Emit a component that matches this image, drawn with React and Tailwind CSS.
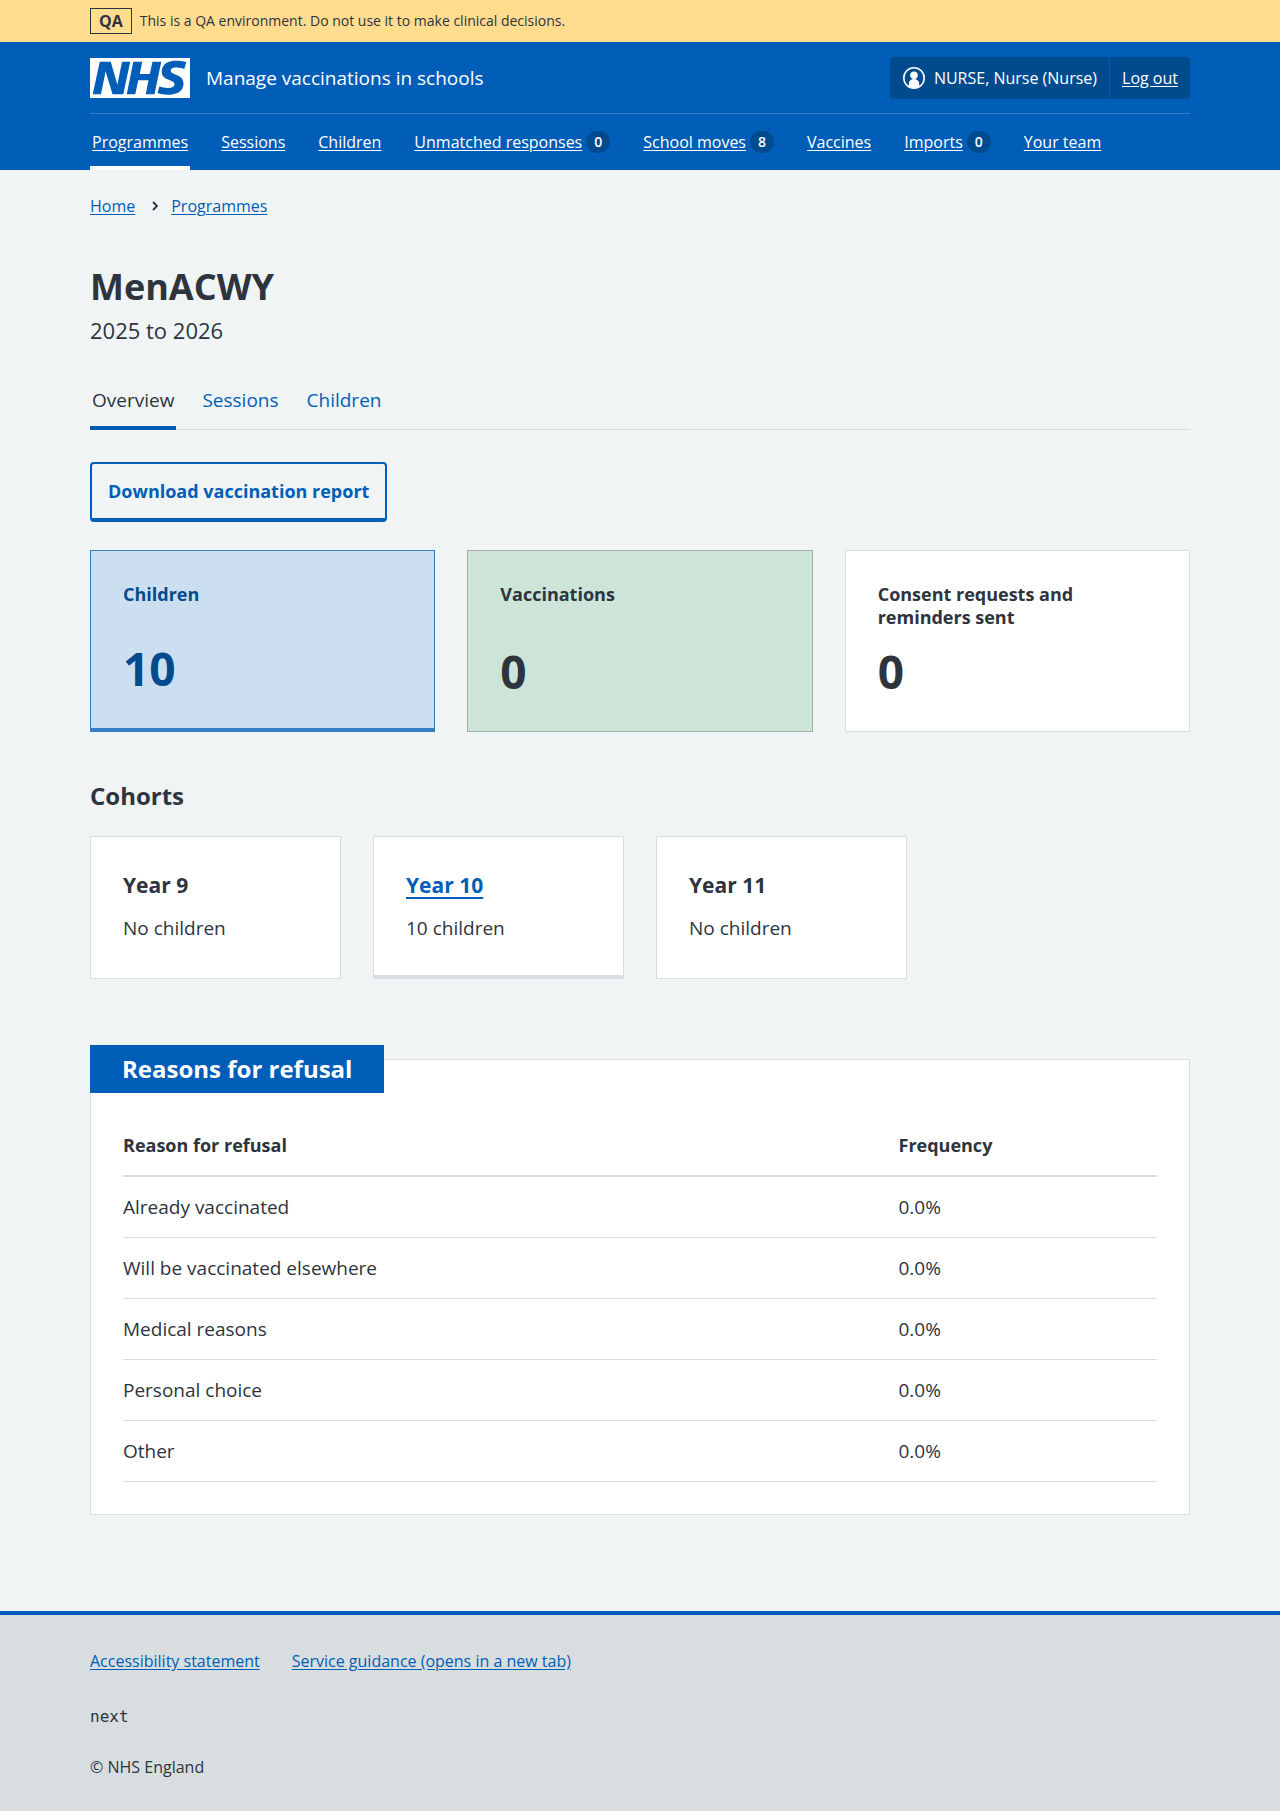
const navItems = [
  { label: "Programmes", current: true },
  { label: "Sessions" },
  { label: "Children" },
  { label: "Unmatched responses", count: 0 },
  { label: "School moves", count: 8 },
  { label: "Vaccines" },
  { label: "Imports", count: 0 },
  { label: "Your team" },
];

const reasons = [
  "Already vaccinated",
  "Will be vaccinated elsewhere",
  "Medical reasons",
  "Personal choice",
  "Other",
];

function Container({ className = "", children }) {
  return <div className={`mx-auto w-full max-w-[1164px] px-8 ${className}`}>{children}</div>;
}

function EnvironmentBanner() {
  return (
    <div className="bg-[#ffdc8e]">
      <Container className="flex h-[42px] items-center gap-2">
        <strong className="border border-[#2d343d] px-2 text-base leading-6 font-bold">QA</strong>
        <span className="text-sm">This is a QA environment. Do not use it to make clinical decisions.</span>
      </Container>
    </div>
  );
}

function Logo() {
  return (
    <svg className="h-10 w-[100px]" viewBox="0 0 40 16" role="img" aria-label="NHS">
      <path fill="#fff" d="M0 0h40v16H0z" />
      <path
        fill="#005eb8"
        d="M3.9 1.5h4.4l2.6 9h.1l1.8-9h3.3l-2.8 13H9l-2.7-9h-.1l-1.8 9H1.1M17.3 1.5h3.6l-1 4.9h4L25 1.5h3.5l-2.7 13h-3.5l1.1-5.6h-4.1l-1.2 5.6h-3.4M37.7 4.4c-.7-.3-1.6-.6-2.9-.6-1.4 0-2.5.2-2.5 1.3 0 1.8 5.1 1.2 5.1 5.1 0 3.6-3.3 4.5-6.4 4.5-1.3 0-2.9-.3-4-.7l.8-2.7c.7.4 2.1.7 3.2.7s2.8-.2 2.8-1.5c0-2.1-5.1-1.3-5.1-5 0-3.4 2.9-4.4 5.8-4.4 1.6 0 3.1.2 4 .6"
      />
    </svg>
  );
}

function UserIcon() {
  return (
    <svg className="h-6 w-6" viewBox="0 0 24 24" aria-hidden="true">
      <circle cx="12" cy="12" r="10.2" fill="none" stroke="#fff" strokeWidth="1.6" />
      <circle cx="12" cy="9.2" r="3.8" fill="#fff" />
      <path fill="#fff" d="M6.8 21v-3.5a5.2 4.5 0 0 1 10.4 0V21a10.500 10.500 0 0 1-10.400 0z" />
    </svg>
  );
}

function Header() {
  return (
    <header className="bg-[#005eb8] text-white">
      <Container>
        <div className="flex h-[71px] items-center justify-between">
          <a href="#" className="flex items-center gap-4">
            <Logo />
            <span className="text-[19px] leading-7">Manage vaccinations in schools</span>
          </a>
          <div className="flex h-[42px] items-stretch rounded bg-[#004b8d] text-base">
            <span className="flex items-center gap-2 px-3">
              <UserIcon />
              NURSE, Nurse (Nurse)
            </span>
            <a href="#" className="flex items-center border-l border-[#005eb8] px-3 underline underline-offset-2">
              Log out
            </a>
          </div>
        </div>
        <nav aria-label="Main" className="flex gap-[29px] border-t border-[#337ec6]">
          {navItems.map((item) => (
            <a
              key={item.label}
              href="#"
              className={`flex h-14 items-center gap-1 border-b-4 px-0.5 pt-1 text-base ${item.current ? "border-white" : "border-transparent"}`}
            >
              <span className="underline underline-offset-2">{item.label}</span>
              {item.count !== undefined && (
                <span className="flex h-[22px] min-w-6 items-center justify-center rounded-full bg-[#004b8d] text-sm font-semibold">
                  {item.count}
                </span>
              )}
            </a>
          ))}
        </nav>
      </Container>
    </header>
  );
}

function StatCard({ title, value, className, href }) {
  const linked = Boolean(href);
  return (
    <div className={`flex min-h-[182px] flex-col justify-between px-8 pt-8 pb-7 ${className}`}>
      <h2 className="text-lg leading-[23px] font-bold">
        {linked ? <a href={href}>{title}</a> : title}
      </h2>
      <p className="text-[46px] leading-[64px] font-bold">{value}</p>
    </div>
  );
}

function CohortCard({ title, text, href }) {
  return (
    <div className={`h-[143px] border border-[#d8dde0] bg-white px-8 pt-8 ${href ? "border-b-4" : ""}`}>
      <h3 className="text-[21px] leading-8 font-bold">
        {href ? (
          <a href={href} className="text-[#005eb8] underline decoration-2 underline-offset-4">
            {title}
          </a>
        ) : (
          title
        )}
      </h3>
      <p className="mt-[13px] text-[19px] leading-7">{text}</p>
    </div>
  );
}

export default function App() {
  return (
    <div className="flex min-h-screen flex-col bg-[#f0f4f5] font-['Open_Sans','Noto_Sans',sans-serif] text-[#2d343d]">
      <EnvironmentBanner />
      <Header />
      <Container className="pb-24">
        <nav aria-label="Breadcrumb" className="flex items-center pt-6 text-base text-[#005eb8]">
          <a href="#" className="underline underline-offset-2">Home</a>
          <svg className="mr-2 ml-3 h-4 w-4" viewBox="0 0 16 16" fill="none" stroke="#2d343d" strokeWidth="1.8" aria-hidden="true">
            <path d="M6 4l4 4-4 4" />
          </svg>
          <a href="#" className="underline underline-offset-2">Programmes</a>
        </nav>

        <main>
          <h1 className="mt-12 text-4xl leading-[42px] font-bold">MenACWY</h1>
          <p className="mt-1 text-[22px] leading-9">2025 to 2026</p>

          <nav aria-label="Programme" className="mt-[26px] flex gap-6 border-b border-[#d8dde0] text-[19px] leading-7 text-[#005eb8]">
            <a href="#" aria-current="page" className="-mb-px border-b-4 border-[#005eb8] px-0.5 py-3 text-[#2d343d]">Overview</a>
            <a href="#" className="px-0.5 py-3">Sessions</a>
            <a href="#" className="px-0.5 py-3">Children</a>
          </nav>

          <button type="button" className="mt-8 h-[60px] rounded border-2 border-b-4 border-[#005eb8] px-4 text-lg font-bold text-[#005eb8]">
            Download vaccination report
          </button>

          <div className="mt-7 grid grid-cols-3 gap-8">
            <StatCard title="Children" value="10" href="#" className="border border-b-4 border-[#337ec6] bg-[#ccdff1] text-[#004b8d]" />
            <StatCard title="Vaccinations" value="0" className="border border-[#a3afa8] bg-[#cce5d8]" />
            <StatCard title="Consent requests and reminders sent" value="0" className="border border-[#d8dde0] bg-white" />
          </div>

          <h2 className="mt-12 text-2xl leading-8 font-bold">Cohorts</h2>
          <div className="mt-6 grid grid-cols-4 gap-8">
            <CohortCard title="Year 9" text="No children" />
            <CohortCard title="Year 10" text="10 children" href="#" />
            <CohortCard title="Year 11" text="No children" />
          </div>

          <section className="mt-20 border border-[#d8dde0] bg-white px-8 pb-8">
            <h2 className="-mt-4 -ml-[33px] inline-block bg-[#005eb8] px-8 py-2 text-2xl leading-8 font-bold text-white">
              Reasons for refusal
            </h2>
            <table className="mt-[22px] w-full table-fixed text-left text-[19px] leading-7">
              <thead>
                <tr className="border-b-2 border-[#d8dde0] text-lg leading-7">
                  <th className="w-3/4 py-4 font-bold">Reason for refusal</th>
                  <th className="py-4 font-bold">Frequency</th>
                </tr>
              </thead>
              <tbody>
                {reasons.map((reason) => (
                  <tr key={reason} className="border-b border-[#d8dde0]">
                    <td className="py-4">{reason}</td>
                    <td className="py-4">0.0%</td>
                  </tr>
                ))}
              </tbody>
            </table>
          </section>
        </main>
      </Container>

      <footer className="flex-1 border-t-4 border-[#005eb8] bg-[#d8dde0] pb-6">
        <Container className="pt-[34px] text-base">
          <div className="flex gap-8 text-[#005eb8]">
            <a href="#" className="underline underline-offset-2">Accessibility statement</a>
            <a href="#" className="underline underline-offset-2">Service guidance (opens in a new tab)</a>
          </div>
          <p className="mt-8 font-['DejaVu_Sans_Mono',monospace]">next</p>
          <p className="mt-[26px]">© NHS England</p>
        </Container>
      </footer>
    </div>
  );
}
